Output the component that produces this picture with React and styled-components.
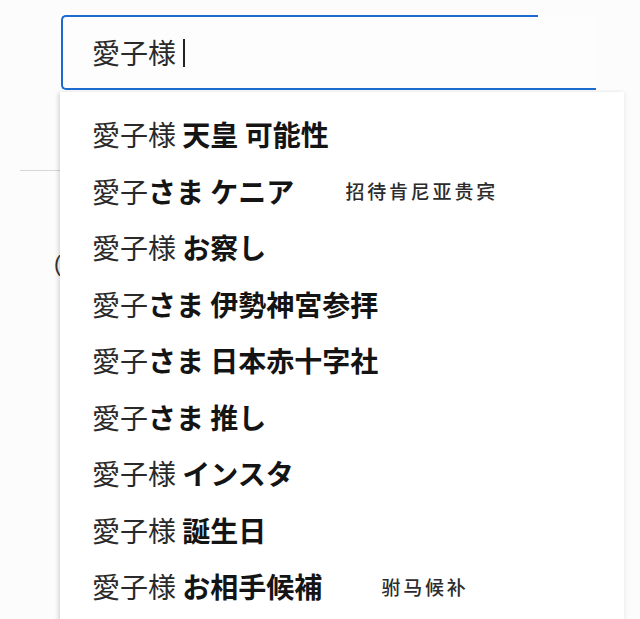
// Search box with its open autocomplete list

import React from 'react';
import styled, {createGlobalStyle} from 'styled-components';

const GlobalStyle = createGlobalStyle`
  html, body {
    margin: 0;
    padding: 0;
    background: #fcfcfd;
  }
  body {
    font-family: "Noto Sans CJK JP", "Noto Sans", sans-serif;
  }
`

// typed prefix (normal weight) + completion (bold) + optional chinese note
const suggestions = [
  {typed: '愛子様', rest: ' 天皇 可能性'},
  {typed: '愛子', rest: 'さま ケニア', note: '招待肯尼亚贵宾', noteGap: 51},
  {typed: '愛子様', rest: ' お察し'},
  {typed: '愛子', rest: 'さま 伊勢神宮参拝'},
  {typed: '愛子', rest: 'さま 日本赤十字社'},
  {typed: '愛子', rest: 'さま 推し'},
  {typed: '愛子様', rest: ' インスタ'},
  {typed: '愛子様', rest: ' 誕生日'},
  {typed: '愛子様', rest: ' お相手候補', note: '驸马候补', noteGap: 59},
];

export default function App() {
  return (<Page>
    <GlobalStyle />

    <SearchBox>
      <Query>愛子様</Query>
      <Caret />
    </SearchBox>

    {/* page content sitting under the open list */}
    <Divider />
    <BehindText>(</BehindText>

    <Dropdown>
      {suggestions.map((s, i) => <Row key={i}>
        <Label>
          <Typed>{s.typed}</Typed>
          <Completion>{s.rest}</Completion>
        </Label>
        {s.note && <Note gap={s.noteGap}>{s.note}</Note>}
      </Row>)}
    </Dropdown>
  </Page>);
}

const Page = styled.div `
  position: relative;
  width: 640px;
  height: 619px;
  overflow: hidden;
  padding-top: 15px;
  box-sizing: border-box;
`

const SearchBox = styled.div `
  position: relative;
  margin-left: 61px;
  width: 535px;
  height: 75px;
  box-sizing: border-box;
  border: 2px solid #1c6bcf;
  border-right: none;
  border-radius: 5px 0 0 5px;
  padding-left: 29px;
  display: flex;
  align-items: center;
  background: #fdfdfe;

  /* the top edge of the box stops short of the bottom one */
  &::after {
    content: "";
    position: absolute;
    top: -2px;
    right: 0;
    width: 58px;
    height: 2px;
    background: #fcfcfd;
  }
`

const Query = styled.span `
  font-size: 28px;
  color: #2a2a2a;
  line-height: 1;
  margin-top: -2px;
`

const Caret = styled.span `
  width: 2px;
  height: 28px;
  margin-left: 7px;
  background: #222;
`

const Divider = styled.div `
  margin: 80px 0 0 20px;
  width: 120px;
  height: 1px;
  background: #d6d8dc;
`

const BehindText = styled.div `
  margin: 81px 0 0 54px;
  font-family: "Liberation Sans", sans-serif;
  font-size: 22px;
  line-height: 24px;
  color: #333;
`

const Dropdown = styled.div `
  position: absolute;
  top: 92px;
  left: 60px;
  width: 564px;
  height: 560px;
  background: #fff;
  padding-top: 14px;
  box-sizing: border-box;
  box-shadow: -2px 1px 4px rgba(0, 0, 0, 0.14), 2px 0 5px rgba(0, 0, 0, 0.04);
`

const Row = styled.div `
  height: 56.5px;
  display: flex;
  align-items: center;
  padding-left: 32px;
  white-space: pre;
`

const Label = styled.span `
  font-size: 28px;
`

const Typed = styled.span `
  color: #2a2a2a;
  font-weight: 400;
`

const Completion = styled.span `
  color: #141414;
  font-weight: 700;
`

const Note = styled.span `
  margin-left: ${props => props.gap}px;
  font-family: "Noto Sans CJK SC", sans-serif;
  font-size: 19px;
  letter-spacing: 2.8px;
  color: #2c2c2c;
  font-weight: 500;
`
